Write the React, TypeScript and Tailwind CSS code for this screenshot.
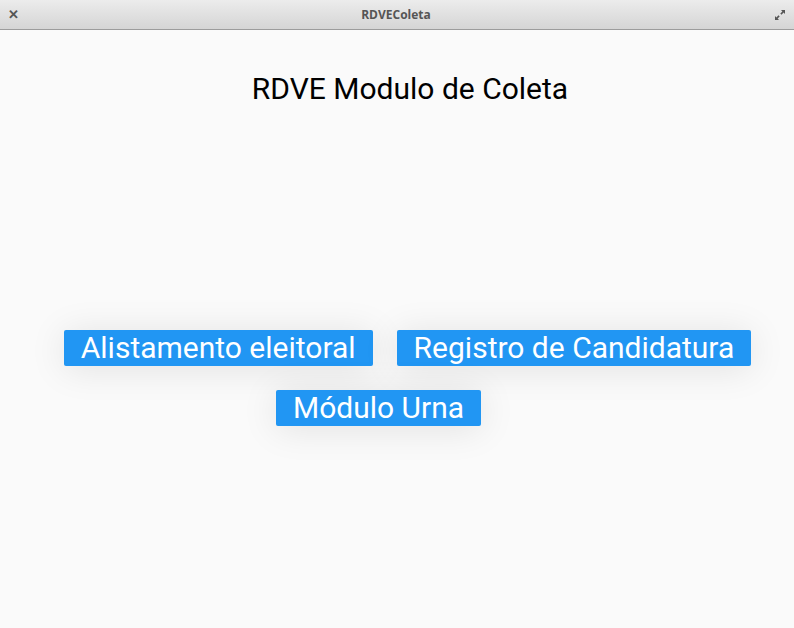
import React from 'react';

const MenuButton = ({ label }: { label: string }) => (
  <button className="h-[36px] px-[17px] bg-[#2196f3] text-white rounded-[2px] text-[30px] leading-[36px] shadow-[0_3px_36px_rgba(0,0,0,0.1)] [font-family:Roboto,sans-serif]">
    {label}
  </button>
);

export default function App() {
  return (
    <div className="w-[794px] h-[628px] flex flex-col bg-[#fafafa] overflow-hidden">
      {/* window title bar */}
      <div className="h-[30px] shrink-0 flex items-center justify-between px-[8px] bg-gradient-to-b from-[#ececec] to-[#d5d5d5] border-b border-[#9c9c9c]">
        <span className="w-[10px] text-[13px] font-bold text-[#555] [font-family:'Open_Sans',sans-serif]">✕</span>
        <span className="text-[12px] font-bold text-[#555] [font-family:'Open_Sans',sans-serif]">RDVEColeta</span>
        <svg width="12" height="12" viewBox="0 0 12 12" className="text-[#555]">
          <path d="M7 1h4v4L9.6 3.6 7.5 5.7 6.3 4.5 8.4 2.4z M5 11H1V7l1.4 1.4 2.1-2.1 1.2 1.2-2.1 2.1z" fill="currentColor" />
        </svg>
      </div>

      <div className="flex-1 flex flex-col">
        <h1 className="mt-[39px] pl-[26px] text-center text-[30px] leading-[40px] text-black [font-family:Roboto,sans-serif]">
          RDVE Modulo de Coleta
        </h1>

        <div className="mt-[221px] flex flex-col gap-[24px]">
          <div className="flex justify-center gap-[24px] pl-[21px]">
            <MenuButton label="Alistamento eleitoral" />
            <MenuButton label="Registro de Candidatura" />
          </div>
          <div className="flex justify-center pr-[37px]">
            <MenuButton label="Módulo Urna" />
          </div>
        </div>
      </div>
    </div>
  );
}
